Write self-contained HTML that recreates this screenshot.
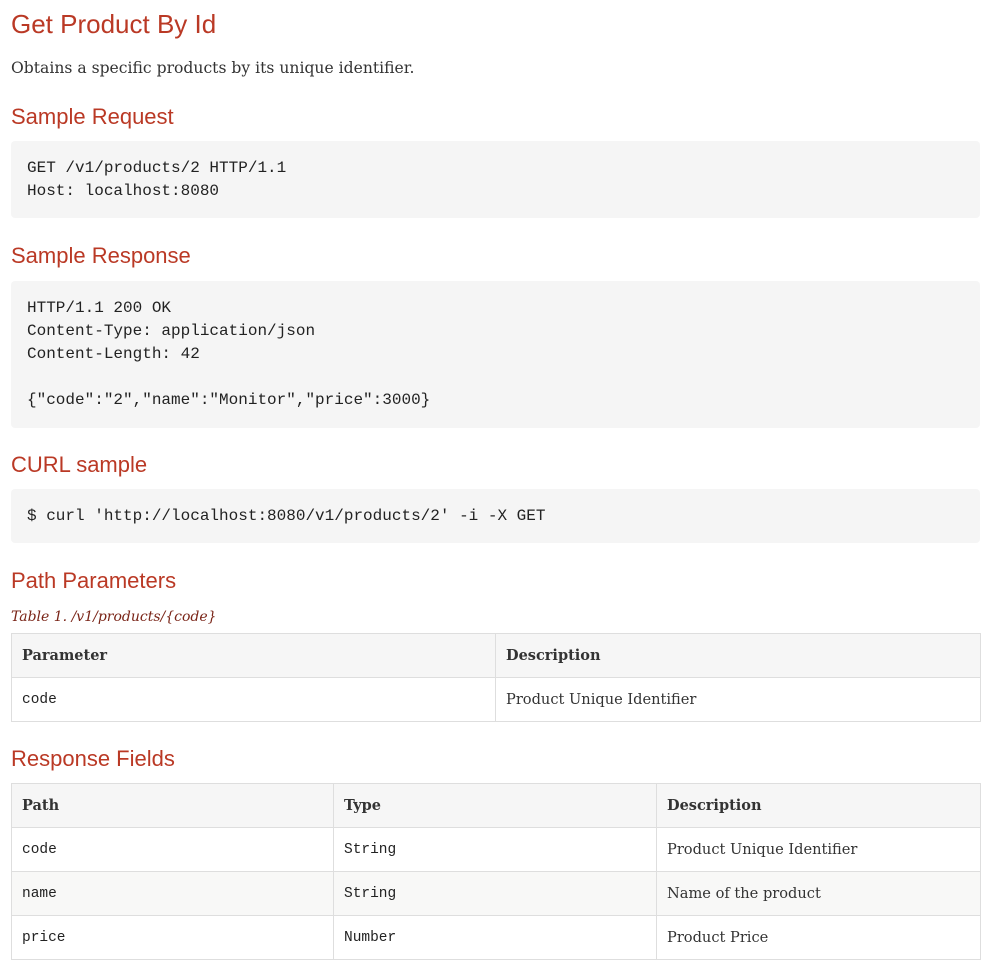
<!DOCTYPE html>
<html><head><meta charset="utf-8"><style>
body{margin:0;background:#fff;width:987px;height:970px;position:relative;overflow:hidden}
.a{position:absolute;white-space:pre}
.h{font-family:"Liberation Sans",sans-serif;color:#ba3925;font-weight:normal}
.s{font-family:"DejaVu Serif","Liberation Serif",serif;color:#333}
.m{font-family:"Liberation Mono","DejaVu Sans Mono",monospace;color:#222}
.pre{position:absolute;left:11px;width:969px;background:#f5f5f5;border-radius:4px}
table{position:absolute;left:11px;width:970px;border-collapse:collapse;table-layout:fixed}
td,th{border:1px solid #dedede;height:43px;padding:0 0 0 10px;text-align:left;vertical-align:middle}
th{background:#f6f6f6;font-family:"DejaVu Serif","Liberation Serif",serif;font-weight:bold;font-size:14.5px;color:#333}
td{font-family:"DejaVu Serif","Liberation Serif",serif;font-size:14.6px;color:#333}
td.c{font-family:"Liberation Mono","DejaVu Sans Mono",monospace;font-size:14.5px;color:#222}
tr.alt td{background:#f8f8f7}
</style></head><body>
<div class="a h" style="left:11px;top:8px;font-size:26px;line-height:32px">Get Product By Id</div>
<div class="a s" style="left:11px;top:57px;font-size:15.6px;line-height:22px">Obtains a specific products by its unique identifier.</div>
<div class="a h" style="left:11px;top:103px;font-size:22px;line-height:28px">Sample Request</div>
<div class="pre" style="top:141px;height:77px"></div>
<div class="a m" style="left:27px;top:157px;font-size:16px;line-height:23px">GET /v1/products/2 HTTP/1.1
Host: localhost:8080</div>
<div class="a h" style="left:11px;top:242px;font-size:22px;line-height:28px">Sample Response</div>
<div class="pre" style="top:281px;height:147px"></div>
<div class="a m" style="left:27px;top:297px;font-size:16px;line-height:23px">HTTP/1.1 200 OK
Content-Type: application/json
Content-Length: 42

{"code":"2","name":"Monitor","price":3000}</div>
<div class="a h" style="left:11px;top:451px;font-size:22px;line-height:28px">CURL sample</div>
<div class="pre" style="top:489px;height:54px"></div>
<div class="a m" style="left:27px;top:505px;font-size:16px;line-height:23px">$ curl 'http://localhost:8080/v1/products/2' -i -X GET</div>
<div class="a h" style="left:11px;top:567px;font-size:22px;line-height:28px">Path Parameters</div>
<div class="a s" style="left:11px;top:606px;font-size:14px;line-height:22px;font-style:italic;color:#7a2518">Table 1. /v1/products/{code}</div>
<table style="top:633px"><colgroup><col style="width:484px"><col></colgroup>
<tr><th>Parameter</th><th>Description</th></tr>
<tr><td class="c">code</td><td>Product Unique Identifier</td></tr>
</table>
<div class="a h" style="left:11px;top:745px;font-size:22px;line-height:28px">Response Fields</div>
<table style="top:783px"><colgroup><col style="width:322px"><col style="width:323px"><col></colgroup>
<tr><th>Path</th><th>Type</th><th>Description</th></tr>
<tr><td class="c">code</td><td class="c">String</td><td>Product Unique Identifier</td></tr>
<tr class="alt"><td class="c">name</td><td class="c">String</td><td>Name of the product</td></tr>
<tr><td class="c">price</td><td class="c">Number</td><td>Product Price</td></tr>
</table>
</body></html>
